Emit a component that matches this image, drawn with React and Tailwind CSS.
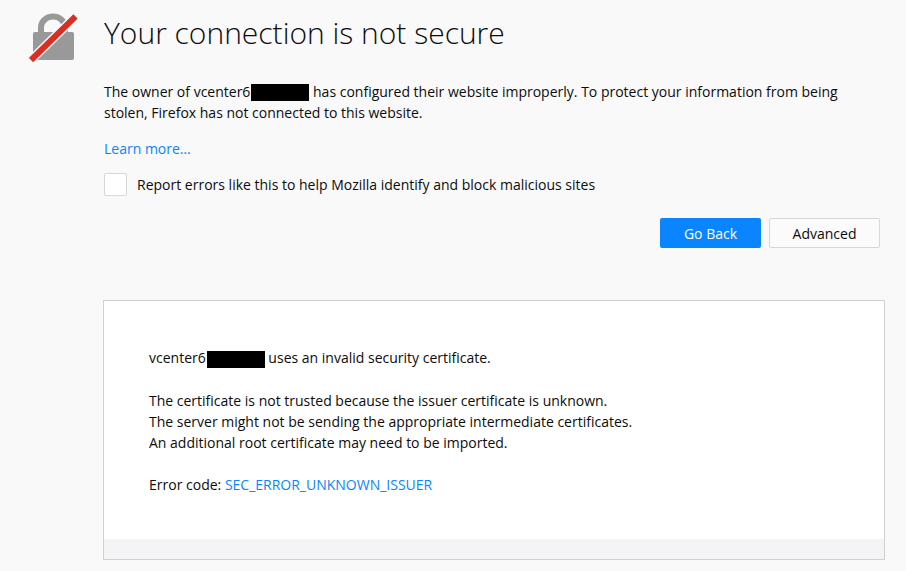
import { useState } from 'react'

function LockIcon() {
  return (
    <svg className="w-12 h-[50px] shrink-0" viewBox="0 0 48 50" aria-hidden="true">
      <path d="M12 24V14.5a12 11 0 0 1 24 0v9" fill="none" stroke="#999999" strokeWidth="6" />
      <rect x="4" y="19" width="41" height="28" rx="2" fill="#999999" />
      <path d="M0 49 48 2" stroke="#f9f9fa" strokeWidth="9" />
      <path d="M2 47 46.5 3.5" stroke="#dc2d22" strokeWidth="6" />
    </svg>
  )
}

function Redacted() {
  return <span className="inline-block w-[58px] h-[17px] ml-px mb-px bg-black align-middle" />
}

function App() {
  const [report, setReport] = useState(false)
  const [advanced, setAdvanced] = useState(true)

  return (
    <div className="min-h-screen bg-[#f9f9fa] pl-[29px] pr-[21px] pt-[13px] pb-3 font-['Open_Sans',sans-serif] text-sm leading-[21px] text-[#0c0c0d]">
      <header className="flex gap-[27px]">
        <LockIcon />
        <h1 className="text-[30px] leading-10 font-light">Your connection is not secure</h1>
      </header>

      <main className="pl-[74px]">
        <div className="pl-px pr-[5px]">
          <p className="mt-[18px]">
            The owner of vcenter6<Redacted /> has configured their website improperly. To protect your information from being stolen, Firefox has not connected to this website.
          </p>
          <p className="mt-[15px]">
            <a href="#learn-more" className="text-[#0a84ff]">Learn more…</a>
          </p>

          <div className="flex items-center gap-2.5 mt-3.5">
            <input
              id="report"
              type="checkbox"
              checked={report}
              onChange={(e) => setReport(e.target.checked)}
              className="appearance-none w-[23px] h-[23px] border border-[#d7d7db] rounded-xs bg-white checked:bg-[#0a84ff]"
            />
            <label htmlFor="report">Report errors like this to help Mozilla identify and block malicious sites</label>
          </div>

          <div className="flex justify-end gap-2 mt-[22px]">
            <button onClick={() => window.history.back()} className="w-[101px] h-[30px] rounded-xs bg-[#0a84ff] text-white">
              Go Back
            </button>
            <button
              onClick={() => setAdvanced(!advanced)}
              className="w-[111px] h-[30px] rounded-xs border border-[#d7d7db] bg-[#fbfbfb]"
            >
              Advanced
            </button>
          </div>
        </div>

        {advanced && (
          <section className="mt-[52px] border border-[#d0d0d2] bg-white">
            <div className="px-[45px] pt-[46px] pb-11">
              <p>
                vcenter6<Redacted /> uses an invalid security certificate.
              </p>
              <p className="mt-[21px]">
                The certificate is not trusted because the issuer certificate is unknown.
                <br />
                The server might not be sending the appropriate intermediate certificates.
                <br />
                An additional root certificate may need to be imported.
              </p>
              <p className="mt-[21px]">
                Error code: <a href="#error-code" className="text-[#0a84ff]">SEC_ERROR_UNKNOWN_ISSUER</a>
              </p>
            </div>
            <div className="h-5 bg-[#f4f4f6]" />
          </section>
        )}
      </main>
    </div>
  )
}

export default App
